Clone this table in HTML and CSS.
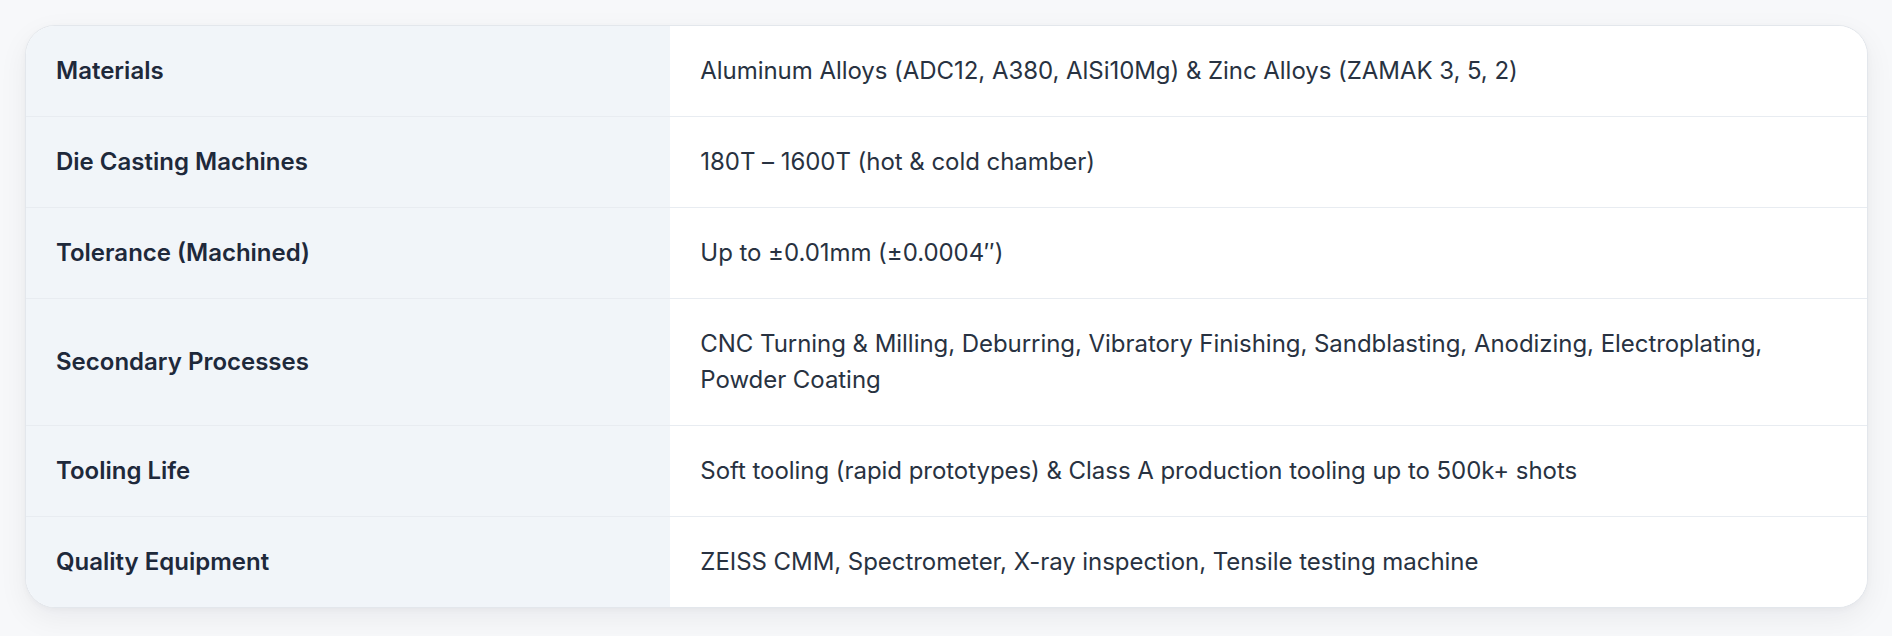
FILE: index.html
```html
<!DOCTYPE html>
<html lang="en">
<head>
<meta charset="utf-8">
<title>Die Casting Capabilities</title>
<link rel="stylesheet" href="styles.css">
</head>
<body>
<div class="page">
  <div class="spec-card">
    <table class="spec-table">
      <tbody>
        <tr>
          <th>Materials</th>
          <td>Aluminum Alloys (ADC12, A380, AlSi10Mg) &amp; Zinc Alloys (ZAMAK 3, 5, 2)</td>
        </tr>
        <tr>
          <th>Die Casting Machines</th>
          <td>180T – 1600T (hot &amp; cold chamber)</td>
        </tr>
        <tr>
          <th>Tolerance (Machined)</th>
          <td>Up to ±0.01mm (±0.0004″)</td>
        </tr>
        <tr>
          <th>Secondary Processes</th>
          <td>CNC Turning &amp; Milling, Deburring, Vibratory Finishing, Sandblasting, Anodizing, Electroplating, Powder Coating</td>
        </tr>
        <tr>
          <th>Tooling Life</th>
          <td>Soft tooling (rapid prototypes) &amp; Class A production tooling up to 500k+ shots</td>
        </tr>
        <tr>
          <th>Quality Equipment</th>
          <td>ZEISS CMM, Spectrometer, X-ray inspection, Tensile testing machine</td>
        </tr>
      </tbody>
    </table>
  </div>
</div>
</body>
</html>
```

FILE: styles.css
```css
html, body {
  margin: 0;
  padding: 0;
}

body {
  background: #f7f8fa;
  font-family: Inter, "Noto Sans", "Liberation Sans", sans-serif;
  -webkit-font-smoothing: antialiased;
}

.page {
  padding: 25px 24px 28px 25px;
}

.spec-card {
  background: #ffffff;
  border: 1px solid #e3e7ec;
  border-radius: 30px;
  overflow: hidden;
  box-shadow: 0 10px 30px rgba(15, 23, 42, 0.06), 0 2px 6px rgba(15, 23, 42, 0.03);
}

.spec-table {
  width: 100%;
  border-collapse: collapse;
  table-layout: fixed;
}

.spec-table th,
.spec-table td {
  box-sizing: border-box;
  padding: 27px 30px;
  font-size: 24px;
  line-height: 36px;
  text-align: left;
  vertical-align: middle;
  border-bottom: 1px solid #e8ecf1;
}

.spec-table tr:last-child th,
.spec-table tr:last-child td {
  border-bottom: none;
}

.spec-table th {
  width: 35%;
  background: #f1f5f9;
  color: #1e293b;
  font-weight: 600;
}

.spec-table td {
  background: #ffffff;
  color: #283241;
  font-weight: 400;
  letter-spacing: -0.05px;
}
```
